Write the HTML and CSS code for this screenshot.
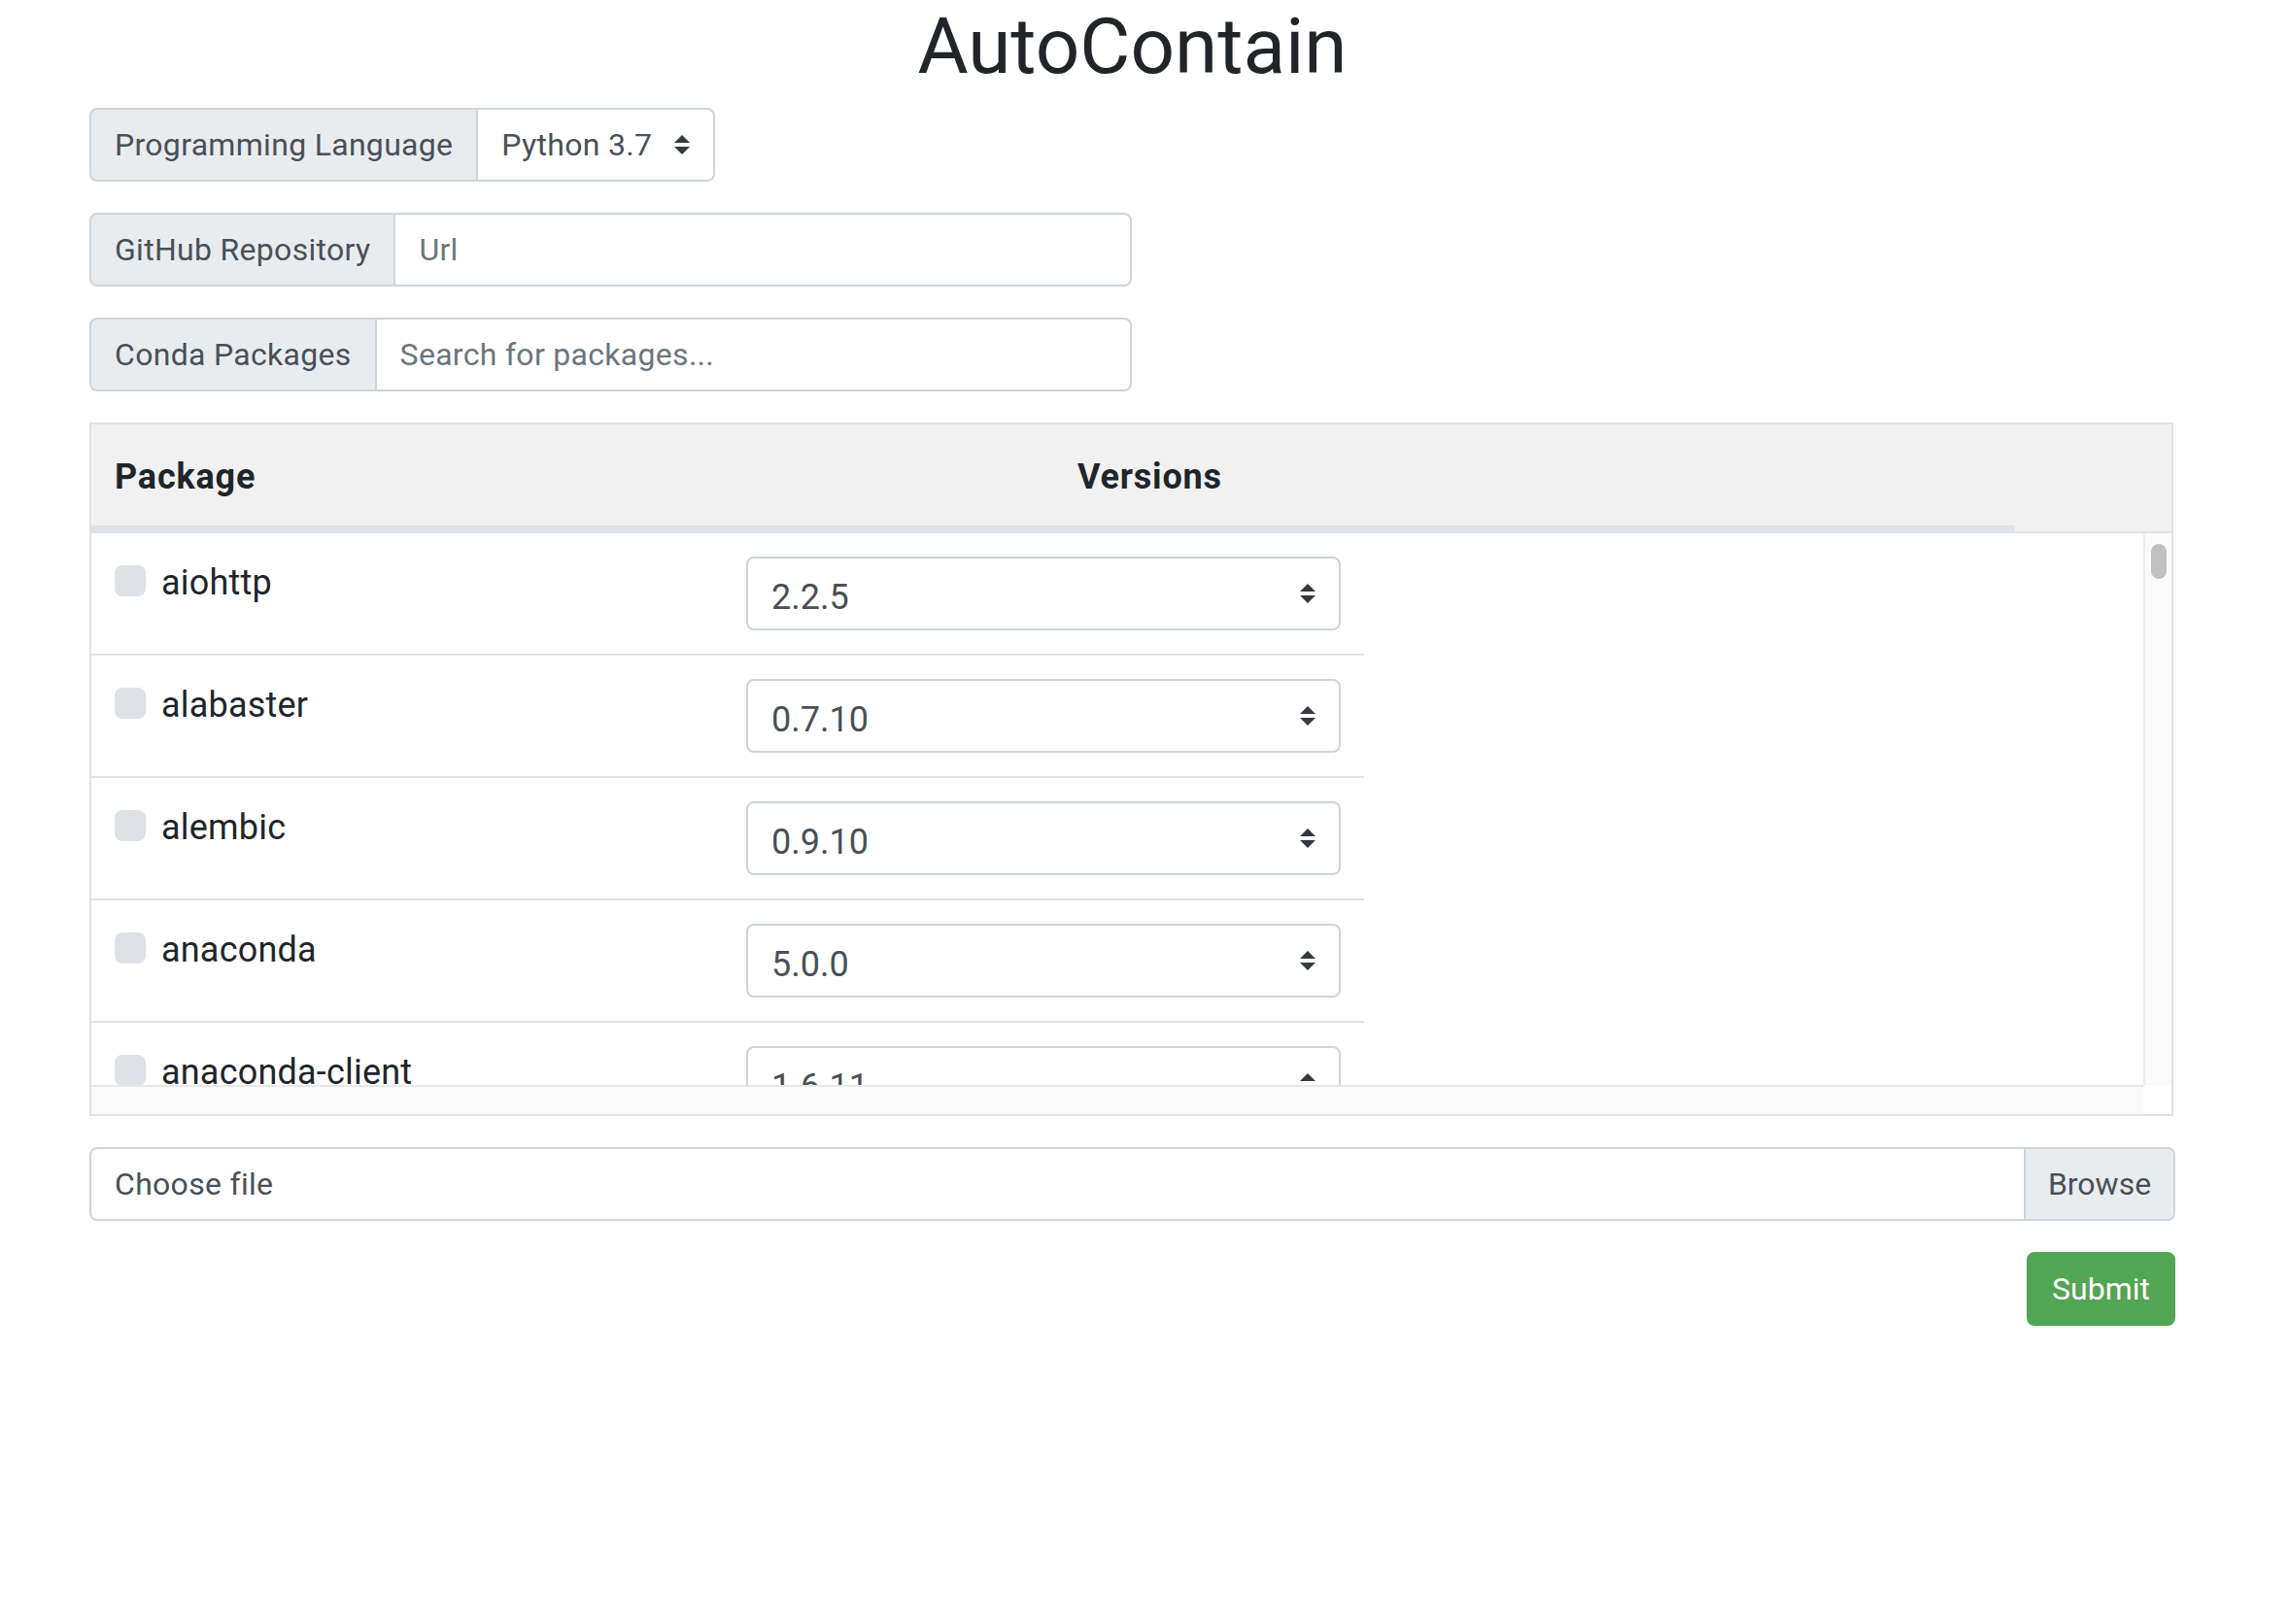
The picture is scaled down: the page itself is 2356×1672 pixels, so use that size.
FILE: index.html
```html
<!DOCTYPE html>
<html lang="en">
<head>
<meta charset="utf-8">
<title>AutoContain</title>
<link rel="stylesheet" href="styles.css">
</head>
<body>
<div class="page">
  <h1 class="title">AutoContain</h1>

  <div class="group group-lang">
    <span class="addon">Programming Language</span>
    <div class="select">
      <span>Python 3.7</span>
      <svg class="arrows" width="16" height="20" viewBox="0 0 4 5"><path fill="#343a40" d="M2 0L0 2h4zm0 5L0 3h4z"/></svg>
    </div>
  </div>

  <div class="group group-wide">
    <span class="addon">GitHub Repository</span>
    <input class="field" type="text" placeholder="Url">
  </div>

  <div class="group group-wide">
    <span class="addon">Conda Packages</span>
    <input class="field" type="text" placeholder="Search for packages...">
  </div>

  <div class="pkg">
    <div class="pkg-head">
      <div class="pkg-head-main">
        <div class="th th-pkg">Package</div>
        <div class="th th-ver">Versions</div>
      </div>
      <div class="pkg-head-fill"></div>
    </div>
    <div class="pkg-body">
      <div class="pkg-rows">
        <div class="row">
          <div class="cell-name"><span class="check"></span><span>aiohttp</span></div>
          <div class="cell-ver"><div class="vselect"><span>2.2.5</span><svg class="arrows" width="16" height="20" viewBox="0 0 4 5"><path fill="#343a40" d="M2 0L0 2h4zm0 5L0 3h4z"/></svg></div></div>
        </div>
        <div class="row">
          <div class="cell-name"><span class="check"></span><span>alabaster</span></div>
          <div class="cell-ver"><div class="vselect"><span>0.7.10</span><svg class="arrows" width="16" height="20" viewBox="0 0 4 5"><path fill="#343a40" d="M2 0L0 2h4zm0 5L0 3h4z"/></svg></div></div>
        </div>
        <div class="row">
          <div class="cell-name"><span class="check"></span><span>alembic</span></div>
          <div class="cell-ver"><div class="vselect"><span>0.9.10</span><svg class="arrows" width="16" height="20" viewBox="0 0 4 5"><path fill="#343a40" d="M2 0L0 2h4zm0 5L0 3h4z"/></svg></div></div>
        </div>
        <div class="row">
          <div class="cell-name"><span class="check"></span><span>anaconda</span></div>
          <div class="cell-ver"><div class="vselect"><span>5.0.0</span><svg class="arrows" width="16" height="20" viewBox="0 0 4 5"><path fill="#343a40" d="M2 0L0 2h4zm0 5L0 3h4z"/></svg></div></div>
        </div>
        <div class="row">
          <div class="cell-name"><span class="check"></span><span>anaconda-client</span></div>
          <div class="cell-ver"><div class="vselect"><span>1.6.11</span><svg class="arrows" width="16" height="20" viewBox="0 0 4 5"><path fill="#343a40" d="M2 0L0 2h4zm0 5L0 3h4z"/></svg></div></div>
        </div>
      </div>
      <div class="vscroll"><div class="thumb"></div></div>
    </div>
    <div class="hscroll-row">
      <div class="hscroll"></div>
      <div class="corner"></div>
    </div>
  </div>

  <div class="file">
    <span class="file-label">Choose file</span>
    <span class="browse">Browse</span>
  </div>

  <div class="actions">
    <button class="submit" type="button">Submit</button>
  </div>
</div>
</body>
</html>
```

FILE: styles.css
```css
* {
  box-sizing: border-box;
}

html,
body {
  margin: 0;
  padding: 0;
  background: #fff;
}

body {
  font-family: Roboto, "Liberation Sans", sans-serif;
  font-size: 32px;
  line-height: 1.5;
  color: #212529;
}

.page {
  margin-left: 92px;
  width: 2147px;
}

.title {
  margin: 0 0 15px;
  font-size: 80px;
  line-height: 96px;
  font-weight: 400;
  text-align: center;
  color: #212529;
}

.group {
  display: flex;
  height: 76px;
  margin-bottom: 32px;
}

.group-lang {
  width: 644px;
}

.group-wide {
  width: 1073px;
}

.addon {
  display: flex;
  align-items: center;
  padding: 0 24px;
  background: #e9ecef;
  border: 2px solid #ced4da;
  border-radius: 8px 0 0 8px;
  color: #495057;
  white-space: nowrap;
  letter-spacing: 0.3px;
}

.select {
  flex: 1;
  display: flex;
  align-items: center;
  justify-content: space-between;
  padding: 0 24px;
  border: 2px solid #ced4da;
  border-left: 0;
  border-radius: 0 8px 8px 0;
  color: #495057;
  background: #fff;
  letter-spacing: 0.3px;
}

.arrows {
  display: block;
  flex: none;
}

.field {
  flex: 1;
  min-width: 0;
  height: 76px;
  margin: 0;
  padding: 0 24px;
  border: 2px solid #ced4da;
  border-left: 0;
  border-radius: 0 8px 8px 0;
  font-family: inherit;
  font-size: 32px;
  letter-spacing: 0.3px;
  color: #495057;
  background: #fff;
  outline: none;
}

.field::placeholder {
  color: #6c757d;
  opacity: 1;
}

.pkg {
  width: 2145px;
  border: 2px solid #dee2e6;
  margin-bottom: 32px;
  font-size: 36px;
}

.pkg-head {
  display: flex;
  height: 112px;
  background: #f1f1f1;
}

.pkg-head-main {
  display: flex;
  width: 1980px;
  border-bottom: 8px solid #dee2e6;
}

.th {
  padding: 27px 24px 23px;
  font-weight: 700;
  letter-spacing: 0.8px;
  color: #212529;
}

.th-pkg {
  width: 991px;
}

.pkg-head-fill {
  flex: 1;
  border-bottom: 2px solid #e2e2e2;
}

.pkg-body {
  display: flex;
  height: 568px;
}

.pkg-rows {
  flex: 1;
  overflow: hidden;
}

.row {
  display: flex;
  width: 1310px;
  border-bottom: 2px solid #dee2e6;
}

.cell-name {
  display: flex;
  align-items: flex-start;
  width: 650px;
  padding: 24px;
  color: #212529;
  letter-spacing: 0.2px;
}

.check {
  flex: none;
  width: 32px;
  height: 32px;
  margin-top: 9px;
  margin-right: 16px;
  border-radius: 8px;
  background: #dee2e6;
}

.cell-ver {
  width: 660px;
  padding: 24px;
}

.vselect {
  display: flex;
  align-items: flex-start;
  justify-content: space-between;
  height: 76px;
  padding: 13px 24px 0;
  border: 2px solid #ced4da;
  border-radius: 8px;
  color: #495057;
  background: #fff;
  overflow: hidden;
}

.vselect .arrows {
  margin-top: 13px;
}

.vscroll {
  width: 29px;
  padding: 11px 5px 0 6px;
  background: #fafafa;
  border-left: 2px solid #ececec;
}

.thumb {
  height: 36px;
  border-radius: 8px;
  background: #c1c1c1;
}

.hscroll-row {
  display: flex;
  height: 30px;
}

.hscroll {
  flex: 1;
  background: #fafafa;
  border-top: 2px solid #e8e8e8;
}

.corner {
  width: 29px;
  background: #fff;
}

.file {
  display: flex;
  height: 76px;
  margin-top: 1px;
  margin-bottom: 32px;
  border: 2px solid #ced4da;
  border-radius: 8px;
  overflow: hidden;
}

.file-label {
  flex: 1;
  display: flex;
  align-items: center;
  padding: 0 24px;
  color: #495057;
  letter-spacing: 0.3px;
}

.browse {
  display: flex;
  align-items: center;
  justify-content: center;
  width: 154px;
  background: #e9ecef;
  border-left: 2px solid #ced4da;
  color: #495057;
}

.actions {
  display: flex;
  justify-content: flex-end;
}

.submit {
  height: 76px;
  padding: 0 24px;
  border: 2px solid #52a552;
  border-radius: 8px;
  background: #52a552;
  color: #fff;
  font-family: inherit;
  font-size: 32px;
  line-height: 1.5;
  cursor: pointer;
}
```
